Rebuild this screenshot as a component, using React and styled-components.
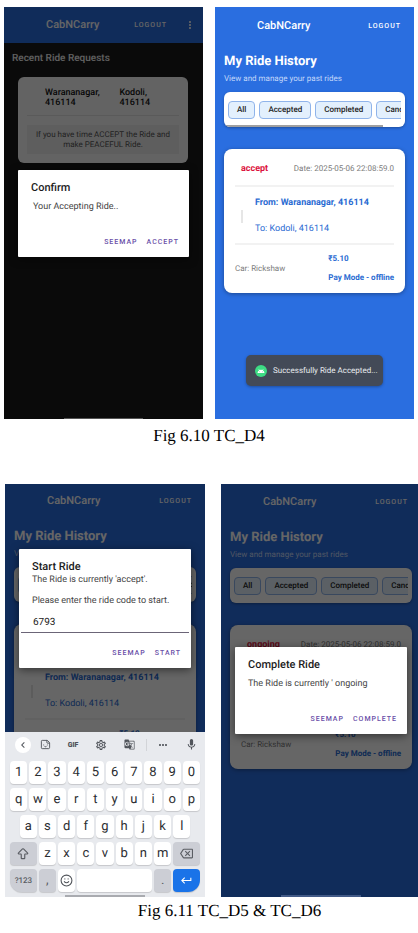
import React from "react";
import styled, { createGlobalStyle } from "styled-components";
import {
  MdChevronLeft,
  MdOutlineSettings,
  MdGTranslate,
  MdMoreHoriz,
  MdMoreVert,
  MdMic,
  MdKeyboardReturn,
  MdOutlineBackspace,
} from "react-icons/md";
import { ArrowBigUp, Smile, Sticker } from "lucide-react";

const GlobalStyle = createGlobalStyle`
  *, *::before, *::after { box-sizing: border-box; }
  body { margin: 0; background: #fff; overflow-x: hidden; text-rendering: geometricPrecision; }
  button, input { font-family: inherit; text-rendering: inherit; }
  h1, h2, h3, p, figure { margin: 0; }
`;

const Page = styled.main`
  display: flex;
  flex-direction: column;
  gap: 38px;
  padding-top: 7px;
  overflow-x: hidden;
  font-family: Roboto, sans-serif;
`;

const Figure = styled.figure`
  display: flex;
  flex-direction: column;
`;

const Screens = styled.div`
  display: grid;
  grid-template-columns: 1fr 1fr;
  gap: ${(p) => (p.$bleed ? 16 : 12)}px;
  margin-right: ${(p) => (p.$bleed ? -3 : 0)}px;
  padding: ${(p) => (p.$bleed ? "0 0 0 5px" : "0 4px")};
`;

const Caption = styled.figcaption`
  padding: ${(p) => (p.$indent ? "4px 0 0 41px" : "7px 0 0")};
  font: 17px/20px "Liberation Serif", serif;
  color: #000;
  text-align: center;
`;

const Phone = styled.section`
  position: relative;
  display: flex;
  flex-direction: column;
  min-width: 0;
  min-height: ${(p) => (p.$tall ? 413 : 412)}px;
  overflow: hidden;
  background: ${(p) => (p.$dark ? "#191919" : "#2a6ee0")};
  white-space: nowrap;
`;

const AppBar = styled.header`
  display: flex;
  align-items: center;
  height: ${(p) => (p.$menu ? 36 : 34)}px;
  padding: 0 ${(p) => (p.$menu ? 7 : 13)}px 0 42px;
  margin-top: ${(p) => p.$inset || 0}px;
  background: #2a6ee0;
  color: #fff;
`;

const AppName = styled.h1`
  flex: 1;
  font-size: 11px;
  line-height: 14px;
  font-weight: 500;
`;

const LogoutButton = styled.button`
  padding: 0;
  border: 0;
  background: none;
  color: #fff;
  font-size: 7px;
  line-height: 10px;
  font-weight: 500;
  letter-spacing: 1px;
`;

const MenuButton = styled.button`
  display: flex;
  margin-left: 17px;
  padding: 0;
  border: 0;
  background: none;
  color: #fff;
  font-size: 12px;
`;

const HistoryBody = styled.div`
  display: flex;
  flex-direction: column;
  padding: 11px 9px 0;
`;

const HistoryTitle = styled.h2`
  color: #fff;
  font-size: 13px;
  line-height: 16px;
  font-weight: 700;
`;

const HistoryHint = styled.p`
  margin-top: 4px;
  color: #c4d8fa;
  font-size: 8px;
  line-height: 10px;
`;

const FilterCard = styled.nav`
  height: 35px;
  margin-top: 8px;
  padding: 9px 4px 0;
  border-radius: 6px;
  overflow: hidden;
  background: #fff;
  box-shadow: 0 1px 3px rgba(0, 0, 0, 0.3);
`;

const Chips = styled.div`
  display: flex;
  gap: 4px;
  height: 18px;
  overflow: hidden;
`;

const Chip = styled.button`
  flex: none;
  padding: 0 8px;
  border: 1px solid #90b4ea;
  border-radius: 4px;
  background: #e3f0fd;
  color: #222;
  font-size: 8px;
  line-height: 16px;
  font-weight: 500;
`;

const ScrollThumb = styled.div`
  width: 92%;
  height: 2px;
  margin: 6px 0 0 -4px;
  background: #a0a0a0;
`;

const RideCard = styled.article`
  margin-top: 22px;
  padding: 0 11px 10px;
  border-radius: 8px;
  background: #fff;
  color: #7c7c7c;
  font-size: 8px;
  line-height: 10px;
  box-shadow: 0 1px 4px rgba(0, 0, 0, 0.35);
`;

const RideTop = styled.div`
  display: flex;
  justify-content: space-between;
  padding: 15px 0 11px 6px;
  border-bottom: 2px solid #f2f2f2;
`;

const Status = styled.strong`
  color: #dc1440;
  font-size: 9px;
`;

const Route = styled.div`
  display: flex;
  align-items: center;
  gap: 12px;
  padding: 11px 0 9px 6px;
  border-bottom: 2px solid #f2f2f2;
  color: #2a6bd2;
  font-size: 9px;
`;

const RouteLine = styled.span`
  width: 2px;
  height: 13px;
  background: #e6e6e6;
`;

const Stops = styled.div`
  display: flex;
  flex-direction: column;
  gap: 16px;
`;

const Stop = styled.span`
  font-weight: ${(p) => (p.$strong ? 700 : 400)};
`;

const RideBottom = styled.div`
  display: flex;
  align-items: center;
  justify-content: space-between;
  padding-top: 9px;
`;

const Payment = styled.div`
  display: flex;
  flex-direction: column;
  gap: 9px;
  color: #2a6bd2;
  font-weight: 700;
`;

const RequestsTitle = styled.h2`
  margin: 10px 8px 0;
  color: #f0f0f0;
  font-size: 10px;
  line-height: 12px;
  font-weight: 500;
`;

const RequestCard = styled.article`
  margin: 12px 15px 0 14px;
  padding: 11px 9px 9px;
  border-radius: 6px;
  background: #f8f8f8;
`;

const RequestStops = styled.div`
  display: grid;
  grid-template-columns: 5fr 4fr;
  padding: 0 0 7px 18px;
  border-bottom: 1px solid #e2e2e2;
  color: #111;
  font-size: 9px;
  line-height: 10px;
  font-weight: 500;
`;

const RequestNote = styled.p`
  margin-top: 9px;
  padding: 5px 4px 4px;
  background: #ececec;
  color: #555;
  font-size: 8px;
  line-height: 10px;
  text-align: center;
`;

const Overlay = styled.div`
  position: absolute;
  inset: 0;
  display: flex;
  flex-direction: column;
  background: rgba(0, 0, 0, 0.6);
`;

const DialogArea = styled.div`
  flex: 1;
  display: flex;
  flex-direction: column;
  justify-content: center;
  padding: 0 14px;
`;

const Dialog = styled.div`
  padding: ${(p) => (p.$form ? "11px 10px 9px 13px" : "11px 10px 9px 13px")};
  border-radius: 1px;
  background: #fff;
  color: #444;
  font-size: 9px;
  line-height: 12px;
  box-shadow: 0 2px 8px rgba(0, 0, 0, 0.5);
`;

const DialogTitle = styled.h3`
  color: #1c1c1c;
  font-size: 11px;
  line-height: 14px;
  font-weight: 500;
`;

const DialogText = styled.p`
  margin-top: ${(p) => p.$gap}px;
  padding-left: ${(p) => (p.$indent ? 2 : 0)}px;
`;

const CodeField = styled.label`
  display: block;
`;

const CodeLabel = styled.span`
  display: block;
  margin-top: 9px;
`;

const CodeInput = styled.input`
  display: block;
  width: calc(100% + 19px);
  height: 20px;
  margin: 6px 0 0 -11px;
  padding: 0 12px;
  border: 0;
  border-bottom: 1px solid #6b6577;
  outline: 0;
  background: none;
  color: #222;
  font-size: 10px;
`;

const Actions = styled.div`
  display: flex;
  justify-content: flex-end;
  gap: 9px;
  margin-top: ${(p) => p.$gap}px;
`;

const Action = styled.button`
  padding: 0;
  border: 0;
  background: none;
  color: #6a50a8;
  font-size: 7px;
  line-height: 12px;
  font-weight: 500;
  letter-spacing: 1px;
`;

const Toast = styled.div`
  position: absolute;
  left: 31px;
  right: 31px;
  bottom: 33px;
  display: flex;
  align-items: center;
  gap: 6px;
  height: 31px;
  padding-left: 9px;
  border-radius: 5px;
  background: #434a57;
  color: #e8eaee;
  font-size: 8px;
  box-shadow: 0 1px 3px rgba(0, 0, 0, 0.3);
`;

const HomeBar = styled.div`
  position: absolute;
  left: 30%;
  right: 30%;
  bottom: 0;
  height: ${(p) => (p.$thin ? 1 : 2)}px;
  background: ${(p) => p.$color};
`;

const KeyboardPanel = styled.div`
  display: flex;
  flex-direction: column;
  gap: 4px;
  height: 165px;
  padding: 0 5px;
  background: #e8eaee;
  color: #2b2d31;
`;

const Tools = styled.div`
  display: grid;
  grid-template-columns: 26fr 28fr 28fr 28fr 28fr 6fr 28fr 28fr;
  align-items: center;
  justify-items: center;
  height: 25px;
  margin: 0 -5px;
`;

const Tool = styled.button`
  display: flex;
  align-items: center;
  justify-content: center;
  width: 16px;
  height: 16px;
  padding: 0;
  border: 0;
  border-radius: 8px;
  justify-self: ${(p) => (p.$round ? "end" : "center")};
  background: ${(p) => (p.$round ? "#fff" : "none")};
  color: #50545a;
  font-size: ${(p) => (p.$label ? 7 : 12)}px;
  font-weight: 900;
`;

const ToolDivider = styled.span`
  width: 1px;
  height: 12px;
  background: #d2d4d8;
`;

const KeyRow = styled.div`
  display: grid;
  grid-template-columns: repeat(20, 1fr);
  column-gap: 2px;
  height: 23px;
`;

const keyFill = { plain: "#fff", grey: "#ccced5", blue: "#1a73e8" };

const Key = styled.button`
  grid-column: ${(p) => (p.$start ? p.$start + " / " : "")} span ${(p) => p.$span || 2};
  display: flex;
  align-items: center;
  justify-content: center;
  min-width: 0;
  padding: 0;
  border: 0;
  border-radius: ${(p) => p.$radius || "4px"};
  background: ${(p) => keyFill[p.$fill || "plain"]};
  color: ${(p) => (p.$fill === "blue" ? "#fff" : p.$fill === "grey" ? "#5a5d63" : "#2b2d31")};
  font-size: ${(p) => p.$size || 13}px;
  font-weight: ${(p) => (p.$size === 8 ? 500 : 400)};
  line-height: 20px;
  box-shadow: 0 1px 1px rgba(0, 0, 0, 0.15);
`;

function AndroidBadge() {
  return (
    <svg width="12" height="12" viewBox="0 0 24 24" aria-hidden="true">
      <circle cx="12" cy="12" r="12" fill="#3ddc84" />
      <path
        d="M5 16a7 7 0 0 1 3.3-5.4L7 8.400l.7-.4 1.300 2.200a8 8 0 0 1 6 0L16.300 8l.7.4-1.300 2.200A7 7 0 0 1 19 16z"
        fill="#fff"
      />
      <circle cx="9" cy="13.500" r="0.8" fill="#3ddc84" />
      <circle cx="15" cy="13.500" r="0.8" fill="#3ddc84" />
    </svg>
  );
}

function RideHistory({ status, inset, scrollbar }) {
  return (
    <>
      <AppBar $inset={inset}>
        <AppName>CabNCarry</AppName>
        <LogoutButton>LOGOUT</LogoutButton>
      </AppBar>
      <HistoryBody>
        <HistoryTitle>My Ride History</HistoryTitle>
        <HistoryHint>View and manage your past rides</HistoryHint>
        <FilterCard aria-label="Ride filters">
          <Chips>
            {["All", "Accepted", "Completed", "Cancelled"].map((name) => (
              <Chip key={name}>{name}</Chip>
            ))}
          </Chips>
          {scrollbar && <ScrollThumb />}
        </FilterCard>
        <RideCard>
          <RideTop>
            <Status>{status}</Status>
            <span>Date: 2025-05-06 22:08:59.0</span>
          </RideTop>
          <Route>
            <RouteLine />
            <Stops>
              <Stop $strong>From: Warananagar, 416114</Stop>
              <Stop>To: Kodoli, 416114</Stop>
            </Stops>
          </Route>
          <RideBottom>
            <span>Car: Rickshaw</span>
            <Payment>
              <span>₹5.10</span>
              <span>Pay Mode - offline</span>
            </Payment>
          </RideBottom>
        </RideCard>
      </HistoryBody>
    </>
  );
}

function DialogActions({ confirm, gap }) {
  return (
    <Actions $gap={gap}>
      <Action>SEEMAP</Action>
      <Action>{confirm}</Action>
    </Actions>
  );
}

function Keyboard() {
  return (
    <KeyboardPanel>
      <Tools>
        <Tool $round aria-label="Back"><MdChevronLeft /></Tool>
        <Tool aria-label="Stickers"><Sticker size={11} /></Tool>
        <Tool $label>GIF</Tool>
        <Tool aria-label="Settings"><MdOutlineSettings /></Tool>
        <Tool aria-label="Translate"><MdGTranslate size={11} /></Tool>
        <ToolDivider />
        <Tool aria-label="More"><MdMoreHoriz /></Tool>
        <Tool aria-label="Voice input"><MdMic size={13} /></Tool>
      </Tools>
      <KeyRow>{[..."1234567890"].map((k) => <Key key={k}>{k}</Key>)}</KeyRow>
      <KeyRow>{[..."qwertyuiop"].map((k) => <Key key={k}>{k}</Key>)}</KeyRow>
      <KeyRow>
        {[..."asdfghjkl"].map((k, i) => (
          <Key key={k} $start={i === 0 ? 2 : undefined}>{k}</Key>
        ))}
      </KeyRow>
      <KeyRow>
        <Key $span={3} $fill="grey" aria-label="Shift"><ArrowBigUp size={14} /></Key>
        {[..."zxcvbnm"].map((k) => <Key key={k}>{k}</Key>)}
        <Key $span={3} $fill="grey" aria-label="Backspace"><MdOutlineBackspace /></Key>
      </KeyRow>
      <KeyRow>
        <Key $span={3} $fill="grey" $size={8} $radius="4px 4px 4px 12px">?123</Key>
        <Key $fill="grey">,</Key>
        <Key aria-label="Emoji"><Smile size={13} color="#50545a" /></Key>
        <Key $span={8} aria-label="Space" />
        <Key $fill="grey">.</Key>
        <Key $span={3} $fill="blue" $radius="4px 4px 12px 4px" aria-label="Enter">
          <MdKeyboardReturn />
        </Key>
      </KeyRow>
      <HomeBar $color="#a9abb0" />
    </KeyboardPanel>
  );
}

export default function App() {
  return (
    <Page>
      <GlobalStyle />
      <Figure>
        <Screens>
          <Phone $dark>
            <AppBar $menu>
              <AppName>CabNCarry</AppName>
              <LogoutButton>LOGOUT</LogoutButton>
              <MenuButton aria-label="Menu"><MdMoreVert /></MenuButton>
            </AppBar>
            <RequestsTitle>Recent Ride Requests</RequestsTitle>
            <RequestCard>
              <RequestStops>
                <span>Warananagar,<br />416114</span>
                <span>Kodoli,<br />416114</span>
              </RequestStops>
              <RequestNote>
                If you have time ACCEPT the Ride and<br />make PEACEFUL Ride.
              </RequestNote>
            </RequestCard>
            <Overlay>
              <DialogArea>
                <Dialog role="dialog" aria-label="Confirm">
                  <DialogTitle>Confirm</DialogTitle>
                  <DialogText $gap={6} $indent>Your Accepting Ride..</DialogText>
                  <DialogActions confirm="ACCEPT" gap={23} />
                </Dialog>
              </DialogArea>
            </Overlay>
            <HomeBar $thin $color="#555" />
          </Phone>
          <Phone>
            <RideHistory status="accept" inset={2} scrollbar />
            <Toast role="status">
              <AndroidBadge />
              <span>Successfully Ride Accepted...</span>
            </Toast>
          </Phone>
        </Screens>
        <Caption>Fig 6.10 TC_D4</Caption>
      </Figure>
      <Figure>
        <Screens $bleed>
          <Phone $tall>
            <RideHistory status="accept" inset={0} />
            <Overlay>
              <DialogArea>
                <Dialog $form role="dialog" aria-label="Start Ride">
                  <DialogTitle>Start Ride</DialogTitle>
                  <DialogText $gap={0}>The Ride is currently 'accept'.</DialogText>
                  <CodeField>
                    <CodeLabel>Please enter the ride code to start.</CodeLabel>
                    <CodeInput defaultValue="6793" inputMode="numeric" />
                  </CodeField>
                  <DialogActions confirm="START" gap={14} />
                </Dialog>
              </DialogArea>
              <Keyboard />
            </Overlay>
          </Phone>
          <Phone $tall>
            <RideHistory status="ongoing" inset={1} />
            <Overlay>
              <DialogArea>
                <Dialog role="dialog" aria-label="Complete Ride">
                  <DialogTitle>Complete Ride</DialogTitle>
                  <DialogText $gap={6}>The Ride is currently ' ongoing</DialogText>
                  <DialogActions confirm="COMPLETE" gap={23} />
                </Dialog>
              </DialogArea>
            </Overlay>
            <HomeBar $color="#425a87" />
          </Phone>
        </Screens>
        <Caption $indent>Fig 6.11 TC_D5 &amp; TC_D6</Caption>
      </Figure>
    </Page>
  );
}
